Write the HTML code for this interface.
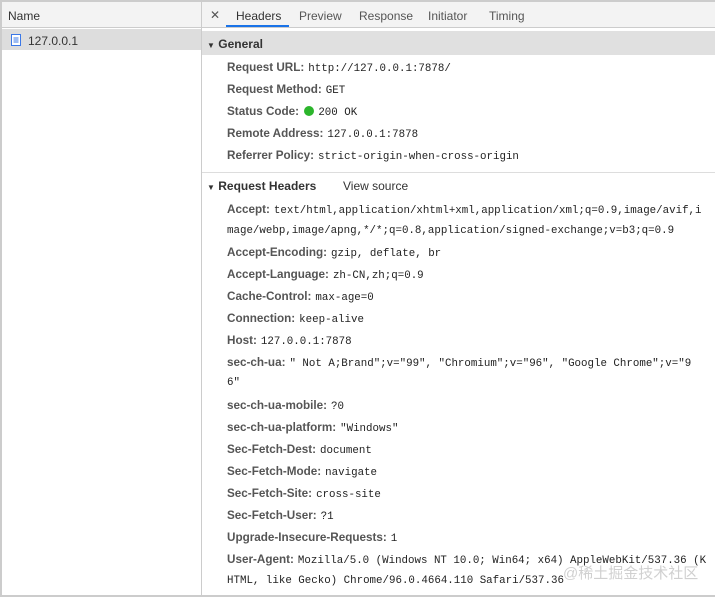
<!DOCTYPE html>
<html><head><meta charset="utf-8"><style>
*{margin:0;padding:0;box-sizing:border-box}
body{width:715px;height:597px;overflow:hidden;background:#fff;font-family:"Liberation Sans",sans-serif;font-size:12px;color:#333;position:relative}
.a{position:absolute;white-space:nowrap}
.l{position:absolute;left:227px;white-space:nowrap;font-weight:bold;color:#555;font-size:11.7px}
.l span{font-family:"Liberation Mono",monospace;font-weight:normal;color:#222;font-size:10.8px;margin-left:4px}
.m{position:absolute;left:227px;white-space:nowrap;font-family:"Liberation Mono",monospace;color:#222;font-size:10.8px}
</style></head><body>
<div class="a" style="left:0;top:0;width:715px;height:2px;background:#ccc"></div>
<div class="a" style="left:0;top:0;width:2px;height:597px;background:#ccc"></div>
<div class="a" style="left:0;top:595px;width:715px;height:2px;background:#ccc"></div>
<div class="a" style="left:2px;top:2px;width:199px;height:26px;background:#f3f3f3;border-bottom:1px solid #ccc"></div>
<div class="a" style="left:8px;top:9px;color:#333">Name</div>
<div class="a" style="left:2px;top:29px;width:199px;height:21px;background:#ddd"></div>
<svg class="a" style="left:11px;top:34px" width="10" height="12"><rect x="0.5" y="0.5" width="9" height="11" fill="#fff" stroke="#3b78e7"/><path d="M2.5 4h5M2.5 6h5M2.5 8h5" stroke="#3b78e7"/></svg>
<div class="a" style="left:28px;top:34px;color:#333">127.0.0.1</div>
<div class="a" style="left:201px;top:0;width:1px;height:597px;background:#ccc"></div>
<div class="a" style="left:202px;top:2px;width:513px;height:26px;background:#f3f3f3;border-bottom:1px solid #ccc"></div>
<div class="a" style="left:210px;top:8px;color:#555">✕</div>
<div class="a" style="left:236px;top:9px;color:#333">Headers</div>
<div class="a" style="left:226px;top:25px;width:63px;height:2px;background:#1a73e8"></div>
<div class="a" style="left:299px;top:9px;color:#555">Preview</div>
<div class="a" style="left:359px;top:9px;color:#555">Response</div>
<div class="a" style="left:428px;top:9px;color:#555">Initiator</div>
<div class="a" style="left:489px;top:9px;color:#555">Timing</div>
<div class="a" style="left:202px;top:31px;width:513px;height:24px;background:#e0e0e0"></div>
<div class="a" style="left:207px;top:37px;font-weight:bold;color:#333"><span style="font-size:8px">▼</span> General</div>
<div class="l" style="top:61px">Request URL:<span>http://127.0.0.1:7878/</span></div>
<div class="l" style="top:83px">Request Method:<span>GET</span></div>
<div class="l" style="top:105px">Status Code: <i style="display:inline-block;width:10px;height:10px;border-radius:50%;background:#2cb52c;vertical-align:-1px;margin-left:2px"></i><span>200 OK</span></div>
<div class="l" style="top:127px">Remote Address:<span>127.0.0.1:7878</span></div>
<div class="l" style="top:149px">Referrer Policy:<span>strict-origin-when-cross-origin</span></div>
<div class="a" style="left:202px;top:172px;width:513px;height:1px;background:#ddd"></div>
<div class="a" style="left:207px;top:179px;font-weight:bold;color:#333"><span style="font-size:8px">▼</span> Request Headers</div>
<div class="a" style="left:343px;top:179px;color:#333">View source</div>
<div class="l" style="top:203px">Accept:<span>text/html,application/xhtml+xml,application/xml;q=0.9,image/avif,i</span></div>
<div class="m" style="top:225px">mage/webp,image/apng,*/*;q=0.8,application/signed-exchange;v=b3;q=0.9</div>
<div class="l" style="top:246px">Accept-Encoding:<span>gzip, deflate, br</span></div>
<div class="l" style="top:268px">Accept-Language:<span>zh-CN,zh;q=0.9</span></div>
<div class="l" style="top:290px">Cache-Control:<span>max-age=0</span></div>
<div class="l" style="top:312px">Connection:<span>keep-alive</span></div>
<div class="l" style="top:334px">Host:<span>127.0.0.1:7878</span></div>
<div class="l" style="top:356px">sec-ch-ua:<span>" Not A;Brand";v="99", "Chromium";v="96", "Google Chrome";v="9</span></div>
<div class="m" style="top:377px">6"</div>
<div class="l" style="top:399px">sec-ch-ua-mobile:<span>?0</span></div>
<div class="l" style="top:421px">sec-ch-ua-platform:<span>"Windows"</span></div>
<div class="l" style="top:443px">Sec-Fetch-Dest:<span>document</span></div>
<div class="l" style="top:465px">Sec-Fetch-Mode:<span>navigate</span></div>
<div class="l" style="top:487px">Sec-Fetch-Site:<span>cross-site</span></div>
<div class="l" style="top:509px">Sec-Fetch-User:<span>?1</span></div>
<div class="l" style="top:531px">Upgrade-Insecure-Requests:<span>1</span></div>
<div class="l" style="top:553px">User-Agent:<span>Mozilla/5.0 (Windows NT 10.0; Win64; x64) AppleWebKit/537.36 (K</span></div>
<div class="m" style="top:575px">HTML, like Gecko) Chrome/96.0.4664.110 Safari/537.36</div>
<div class="a" style="left:563px;top:562px;font-family:'Liberation Sans','Noto Sans CJK SC',sans-serif;font-size:15px;color:rgba(150,150,150,0.45)">@稀土掘金技术社区</div>
</body></html>
